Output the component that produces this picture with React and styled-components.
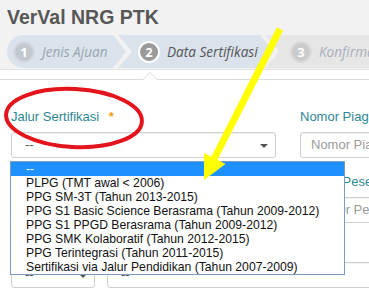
import React from 'react'
import styled, { createGlobalStyle } from 'styled-components'

const GlobalStyle = createGlobalStyle`
  html, body { margin: 0; padding: 0; background: #f2f2f2; }
  body { font-family: "Liberation Sans", Arial, sans-serif; }
`

const options = [
  '--',
  'PLPG (TMT awal < 2006)',
  'PPG SM-3T (Tahun 2013-2015)',
  'PPG S1 Basic Science Berasrama (Tahun 2009-2012)',
  'PPG S1 PPGD Berasrama (Tahun 2009-2012)',
  'PPG SMK Kolaboratif (Tahun 2012-2015)',
  'PPG Terintegrasi (Tahun 2011-2015)',
  'Sertifikasi via Jalur Pendidikan (Tahun 2007-2009)',
]

function App() {
  return (
    <>
      <GlobalStyle />
      <Page>
        <Title>VerVal NRG PTK</Title>
        <StepsBar>
          <Step $w={119} $first $bg="#dae3ec" $pl={6}>
            <Circle $bg="#c3c8ce" $ring="#d2d9e1">1</Circle>
            <StepLabel $color="#9ba4ae">Jenis Ajuan</StepLabel>
          </Step>
          <Step $w={156} $ml={-8} $bg="#dae3ec" $pl={20}>
            <Circle $bg="#9a9a9a" $ring="#ffffff">2</Circle>
            <StepLabel $color="#555">Data Sertifikasi</StepLabel>
          </Step>
          <Step $w={130} $ml={-9} $bg="#e6e6e6" $pl={25}>
            <Circle $bg="#cbcbcb" $ring="#dadada">3</Circle>
            <StepLabel $color="#a6b0bb">Konfirmasi</StepLabel>
          </Step>
        </StepsBar>

        <Panel>
          <Pointer />
          <Form>
            <Field>
              <Label>Jalur Sertifikasi <Req>*</Req></Label>
              <Select>--<Caret /></Select>
            </Field>
            <Field>
              <Label>Nomor Piagam</Label>
              <Input>Nomor Piagam</Input>
            </Field>
            <Field>
              <Label>Tahun Sertifikasi</Label>
              <Select>--<Caret /></Select>
            </Field>
            <Field>
              <Label>Nomor Peserta</Label>
              <Input>Nomor Peserta</Input>
            </Field>
            <WideField>
              <Label>Bidang Studi</Label>
              <SplitRow>
                <Select $w={84}>--<Caret /></Select>
                <Select $w={300}>--</Select>
              </SplitRow>
            </WideField>
          </Form>
        </Panel>

        <OptionList>
          {options.map((o, i) => (
            <Option key={o} $active={i === 0}>{o}</Option>
          ))}
        </OptionList>

        <Marks viewBox="0 0 369 296" width="369" height="296">
          <ellipse cx="74" cy="118" rx="68" ry="29" fill="none" stroke="#e3141b" strokeWidth="4" transform="rotate(3 74 118)" />
          <line x1="280" y1="29" x2="214" y2="159" stroke="#ffff00" strokeWidth="7" />
          <polygon points="204,180 225.5,164 204.1,153" fill="#ffff00" />
        </Marks>
      </Page>
    </>
  )
}

export default App

const Page = styled.div`
  position: relative;
  width: 369px;
  height: 296px;
  overflow: hidden;
  background: #f2f2f2;
`

const Title = styled.h1`
  margin: 0;
  padding: 5px 0 0 7px;
  height: 35px;
  box-sizing: border-box;
  font-size: 19.5px;
  line-height: 24px;
  font-weight: bold;
  color: #575757;
`

const StepsBar = styled.div`
  display: flex;
  height: 33px;
  margin-left: 7px;
  overflow: hidden;
`

const Step = styled.div`
  flex: none;
  box-sizing: border-box;
  width: ${p => p.$w}px;
  margin-left: ${p => p.$ml || 0}px;
  padding-left: ${p => p.$pl}px;
  background: ${p => p.$bg};
  border-radius: ${p => (p.$first ? '17px 0 0 17px' : '0')};
  display: flex;
  align-items: center;
  gap: 7px;
  clip-path: ${p =>
    p.$first
      ? 'polygon(0 0, calc(100% - 13px) 0, 100% 50%, calc(100% - 13px) 100%, 0 100%)'
      : 'polygon(0 0, calc(100% - 14px) 0, 100% 50%, calc(100% - 14px) 100%, 0 100%, 14px 50%)'};
`

const Circle = styled.span`
  flex: none;
  width: 18px;
  height: 18px;
  border-radius: 50%;
  border: 2px solid ${p => p.$ring};
  background: ${p => p.$bg};
  color: #fff;
  font-family: "Open Sans", sans-serif;
  font-weight: bold;
  font-size: 13px;
  line-height: 18px;
  text-align: center;
`

const StepLabel = styled.span`
  font-family: "Open Sans", sans-serif;
  font-style: italic;
  font-size: 13.6px;
  color: ${p => p.$color};
  white-space: nowrap;
`

const Panel = styled.div`
  margin-top: 1px;
  background: #fff;
  border-top: 1px solid #e4e4e4;
  height: 240px;
`

const Pointer = styled.div`
  position: relative;
  height: 9px;
  border-bottom: 1px solid #dcdcdc;

  &::before,
  &::after {
    content: '';
    position: absolute;
    left: 142px;
    bottom: -1px;
    border: 8px solid transparent;
    border-top: 0;
    border-bottom-color: #dcdcdc;
  }
  &::after {
    left: 143px;
    bottom: -1px;
    border-width: 0 7px 7px;
    border-bottom-color: #fff;
  }
`

const Form = styled.div`
  display: grid;
  grid-template-columns: 265px 265px;
  column-gap: 24px;
  row-gap: 16px;
  padding: 29px 0 0 11px;
`

const Field = styled.div`
  display: flex;
  flex-direction: column;
  gap: 7px;
`

const WideField = styled(Field)`
  grid-column: 1 / span 2;
`

const Label = styled.label`
  font-size: 13px;
  line-height: 16px;
  color: #2c8695;
  white-space: nowrap;
`

const Req = styled.span`
  margin-left: 6px;
  color: #f39c12;
  font-weight: bold;
`

const Select = styled.div`
  position: relative;
  box-sizing: border-box;
  width: ${p => (p.$w ? `${p.$w}px` : '100%')};
  flex: none;
  height: 26px;
  padding-left: 13px;
  border: 1px solid #cfcfcf;
  border-radius: 3px;
  background: #fff;
  box-shadow: inset 0 1px 1px rgba(0, 0, 0, 0.06);
  font-size: 13px;
  line-height: 24px;
  color: #555;
`

const Caret = styled.span`
  position: absolute;
  right: 7px;
  top: 11px;
  border-left: 4px solid transparent;
  border-right: 4px solid transparent;
  border-top: 4px solid #555;
`

const Input = styled(Select)`
  padding-left: 10px;
  color: #9a9a9a;
  white-space: nowrap;
  overflow: hidden;
`

const SplitRow = styled.div`
  display: flex;
  gap: 12px;
`

const OptionList = styled.ul`
  position: absolute;
  left: 10px;
  top: 161px;
  width: 335px;
  box-sizing: border-box;
  margin: 0;
  padding: 0;
  list-style: none;
  background: #fff;
  border: 1px solid #7d9cc2;
`

const Option = styled.li`
  height: 14px;
  line-height: 14px;
  padding-left: 15px;
  font-size: 12.2px;
  white-space: nowrap;
  color: ${p => (p.$active ? '#fff' : '#111')};
  background: ${p => (p.$active ? '#1e90ff' : 'transparent')};
`

const Marks = styled.svg`
  position: absolute;
  left: 0;
  top: 0;
  pointer-events: none;
`
